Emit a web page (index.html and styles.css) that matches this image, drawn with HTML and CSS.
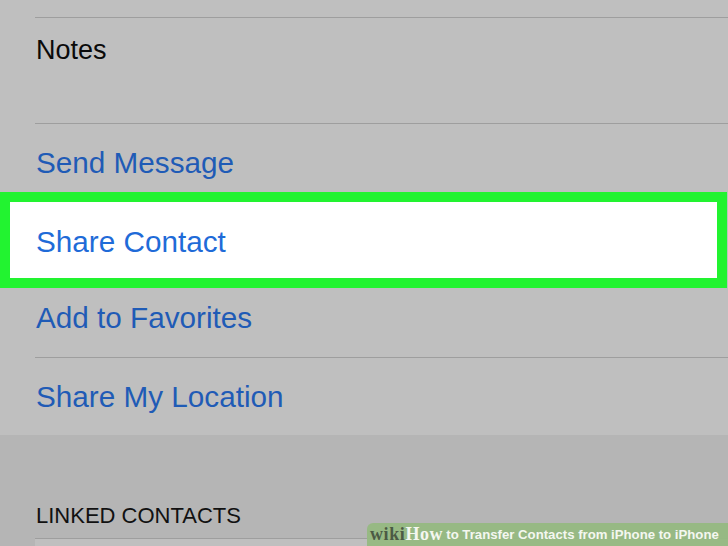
FILE: index.html
```html
<!DOCTYPE html>
<html lang="en">
<head>
  <meta charset="UTF-8" />
  <meta name="viewport" content="width=device-width, initial-scale=1.0" />
  <title>Contact - Share Contact</title>
  <link rel="stylesheet" href="styles.css">
</head>
<body>
  <div class="screen">
    <div class="list">
      <div class="row notes">Notes</div>
      <div class="row action">Send Message</div>
      <div class="row action hl">Share Contact</div>
      <div class="row action">Add to Favorites</div>
      <div class="row action">Share My Location</div>
    </div>

    <div class="section">
      <div class="section-title">LINKED CONTACTS</div>
      <div class="row empty"></div>
    </div>
  </div>

  <!-- caption strip -->
  <div class="caption">
    <span class="wiki">wiki</span><span class="how">How</span>
    <span class="cap-text">to Transfer Contacts from iPhone to iPhone</span>
  </div>
</body>
</html>
```

FILE: styles.css
```css
* {
  box-sizing: border-box;
  margin: 0;
  padding: 0;
}

html, body {
  height: 100%;
  overflow: hidden;
}

body {
  font-family: 'Liberation Sans', Arial, sans-serif;
  background: #bfbfbf;
  color: #0a0a0a;
}

.screen {
  padding-top: 17px;
}

.list {
  display: flex;
  flex-direction: column;
}

.row {
  position: relative;
  border-top: 1px solid #9e9e9e;
  margin-left: 35px;
  padding-left: 1px;
}

.notes {
  height: 106px;
  padding-top: 17px;
  font-size: 27px;
}

.action {
  height: 78px;
  display: flex;
  align-items: center;
  font-size: 29.7px;
  color: #1f5bb6;
}

/* highlighted row, drawn with a thick green frame */
.action.hl {
  margin: 1px 11px 0 10px;
  padding: 4px 0 0 26px;
  height: 76px;
  border-top: none;
  background: #ffffff;
  color: #1f6bd8;
  outline: 10px solid #22f330;
  z-index: 1;
}

.action.hl + .action {
  height: 78px;
  margin-top: 1px;
  border-top: none;
}

.section {
  background: #b5b5b5;
  padding-top: 68px;
}

.section-title {
  font-size: 22px;
  padding-left: 36px;
  height: 35px;
  color: #111;
}

.section .empty {
  height: 20px;
  background: #bfbfbf;
  margin-left: 35px;
}

.caption {
  position: absolute;
  left: 367px;
  right: 0;
  bottom: 0;
  height: 23px;
  background: rgba(150, 185, 130, 0.95);
  border-top-left-radius: 6px;
  display: flex;
  align-items: center;
  padding-left: 3px;
  white-space: nowrap;
  overflow: hidden;
}

.wiki, .how {
  font-family: 'Liberation Serif', 'Times New Roman', serif;
  font-weight: bold;
  font-size: 18px;
  letter-spacing: 0.6px;
}

.wiki {
  color: #4b5a44;
}

.how {
  color: #f4f7f0;
}

.cap-text {
  margin-left: 3px;
  font-weight: bold;
  font-size: 13.2px;
  color: #f4f7f0;
}
```
